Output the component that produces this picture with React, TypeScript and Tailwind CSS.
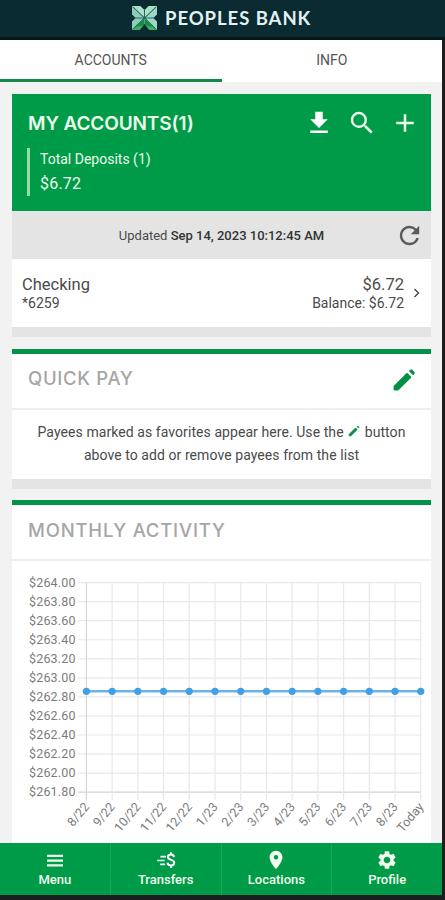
import React from "react";
import { MdAdd, MdFileDownload, MdPlace, MdRefresh, MdSearch, MdSettings } from "react-icons/md";

const months = ["8/22", "9/22", "10/22", "11/22", "12/22", "1/23", "2/23", "3/23", "4/23", "5/23", "6/23", "7/23", "8/23", "Today"];
const amounts = ["$264.00", "$263.80", "$263.60", "$263.40", "$263.20", "$263.00", "$262.80", "$262.60", "$262.40", "$262.20", "$262.00", "$261.80"];

function Logo() {
  return (
    <svg className="mt-[6px] h-[24px] w-[25px] shrink-0" viewBox="0 0 24 24" preserveAspectRatio="none">
      <path d="M0 0H24L12 12Z" fill="#a9e0cb" />
      <path d="M0 0V24L12 12Z" fill="#8bcdb6" />
      <path d="M24 0V24L12 12Z" fill="#9ed8c4" />
      <path d="M0 24H24L12 12Z" fill="#3db05f" />
      <path d="M8 0H16L12 4ZM7.5 24H16.5L12 18ZM0 8.5V15.5L3.5 12ZM24 8.5V15.5L20.5 12Z" fill="#0a2b32" />
      <path d="M1 1L23 23M23 1L1 23M12 3V12M2 12H22" stroke="#2b6660" strokeWidth="1" />
      <path d="M4 21L11.5 13V19ZM20 21L12.5 13V19Z" fill="#168a45" />
    </svg>
  );
}

function Pencil({ className }: { className: string }) {
  return (
    <svg className={className} viewBox="0 0 24 24" fill="currentColor" stroke="currentColor" strokeLinejoin="round">
      <path d="M3.9 17.6L14.6 6.9L17.3 9.6L6.6 20.2H3.9Z" strokeWidth="1.7" />
      <path d="M17.3 4.3L18.3 3.6L20.4 5.7L19.8 6.8Z" strokeWidth="1.6" />
    </svg>
  );
}

function Chart() {
  const x = (i: number) => 74.4 + i * 25.72;
  const y = (i: number) => 21.6 + i * 19.05;
  return (
    <svg className="block h-[282px] w-[419px]" viewBox="0 0 419 282">
      {amounts.map((a, i) => (
        <g key={a}>
          <line x1="66" x2="409" y1={y(i)} y2={y(i)} stroke={i === 11 ? "#d2d2d2" : "#e8e8e8"} strokeWidth="1.2" />
          <text x="63.5" y={y(i) + 4} textAnchor="end" textLength="46.5" className="font-[Roboto] text-[12.5px]" fill="#7c7c7c">{a}</text>
        </g>
      ))}
      {months.map((m, i) => (
        <g key={m}>
          <line x1={x(i)} x2={x(i)} y1={y(0)} y2={y(11) + 8} stroke={i === 0 ? "#d6d6d6" : "#e8e8e8"} strokeWidth="1.2" />
          <text transform={`translate(${x(i) + 3.5} ${y(11) + 15}) rotate(-50)`} textAnchor="end" className="font-[Roboto] text-[12.5px]" fill="#7c7c7c">{m}</text>
        </g>
      ))}
      <line x1={x(0)} x2={x(13)} y1="130.3" y2="130.3" stroke="#6cb3ec" strokeWidth="2.4" />
      {months.map((m, i) => <circle key={m} cx={x(i)} cy="130.3" r="3.6" fill="#419fe6" />)}
    </svg>
  );
}

function MenuIcon() {
  return (
    <svg className="h-[24px] w-[24px]" viewBox="0 0 24 24">
      <path d="M4 7.8h16M4 12.6h16M4 17.4h16" stroke="#f0fcec" strokeWidth="2.3" />
    </svg>
  );
}

function TransferIcon() {
  return (
    <svg className="h-[24px] w-[24px]" viewBox="0 0 24 24" fill="none" stroke="white">
      <path d="M6.5 8.6h5.5M3.2 12.5h7.5M6.2 16.4h5" strokeWidth="1.7" />
      <path d="M20 9.2C19.8 7.4 18.7 6.5 17 6.5c-1.9 0-3.1 1-3.1 2.6 0 3.6 6.3 1.9 6.3 5.6 0 1.7-1.3 2.7-3.2 2.7-2.1 0-3.3-1-3.4-2.8M17 4.2v2.3M17 17.4v2.7" strokeWidth="2" />
    </svg>
  );
}

const nav = [
  { label: "Menu", icon: <MenuIcon /> },
  { label: "Transfers", icon: <TransferIcon /> },
  { label: "Locations", icon: <MdPlace className="h-[22px] w-[22px]" /> },
  { label: "Profile", icon: <MdSettings className="h-[22px] w-[22px]" /> },
];

export default function App() {
  return (
    <div className="flex h-[900px] w-[445px] flex-col overflow-hidden bg-[#1b1d1e] font-[Roboto,sans-serif] text-[#4a4a4a]">
      <header className="flex h-[40px] shrink-0 border-b-[3px] border-[#04171b] bg-[#0a2b32] pl-[132px]">
        <Logo />
        <span className="ml-[8px] mt-[5px] whitespace-nowrap font-[Lato] text-[18.5px] font-bold leading-[27px] tracking-[0.95px] text-[#e3f1f0]">PEOPLES BANK</span>
      </header>

      <div className="flex h-[803px] w-[442px] shrink-0 flex-col overflow-hidden bg-[#f2f2f2]">
        <nav className="flex h-[42px] shrink-0 bg-white text-center text-[14px] leading-[41px] text-[#555]">
          <div className="w-[221.5px] border-b-[3px] border-[#14874a]">ACCOUNTS</div>
          <div className="flex-1">INFO</div>
        </nav>

        <main className="ml-[12px] mt-[12px] w-[419px]">
          <section className="border-b-[10px] border-[#e4e4e4] bg-white">
            <div className="h-[117px] bg-[#009b48] text-[#ecfbea]">
              <div className="flex items-center pl-[16px] pr-[11px] pt-[14px]">
                <h1 className="flex-1 whitespace-nowrap pt-[2px] font-[Inter] text-[19px] font-semibold leading-[28px] tracking-[-0.12px]">MY ACCOUNTS(1)</h1>
                <div className="flex gap-[13px]">
                  <MdFileDownload className="size-[30px] text-white" />
                  <MdSearch className="size-[30px]" />
                  <MdAdd className="size-[30px]" />
                </div>
              </div>
              <div className="ml-[15px] mt-[10px] h-[48px] border-l-[3px] border-[#96dda2] pl-[10px]">
                <div className="text-[14px] leading-[22px]">Total Deposits (1)</div>
                <div className="pt-px text-[16px] leading-[26px] tracking-[0.2px]">$6.72</div>
              </div>
            </div>
            <div className="flex h-[48px] items-center bg-[#e4e4e4] pr-[7px]">
              <div className="flex-1 pl-[36px] pt-px text-center text-[13px] leading-[20px]">Updated <span className="font-medium text-[#333]">Sep 14, 2023 10:12:45 AM</span></div>
              <MdRefresh className="size-[29px] text-[#5a5a5a]" />
            </div>
            <div className="flex h-[68px] items-center pl-[10px] pr-[11px]">
              <div className="flex-1">
                <div className="text-[16.5px] leading-[19px]">Checking</div>
                <div className="text-[14px] leading-[18px]">*6259</div>
              </div>
              <div className="text-right">
                <div className="text-[16.5px] leading-[19px]">$6.72</div>
                <div className="text-[14px] leading-[18px]">Balance: $6.72</div>
              </div>
              <svg className="ml-[9px] h-[10px] w-[7px]" viewBox="0 0 7 10"><path d="M1.5 1L5.5 5L1.5 9" fill="none" stroke="#444" strokeWidth="1.4" /></svg>
            </div>
          </section>

          <section className="mt-[12px] border-b-[10px] border-t-[5px] border-b-[#e4e4e4] border-t-[#04924a] bg-white">
            <div className="flex h-[56px] justify-between border-b-2 border-[#eeeeee] pl-[16px] pr-[13px]">
              <h2 className="pt-[9px] font-[Inter] text-[18.5px] font-medium leading-[30px] tracking-[0.7px] text-[#a6a6a6]">QUICK PAY</h2>
              <Pencil className="mt-[12px] size-[28px] text-[#009045]" />
            </div>
            <p className="h-[69px] pt-[11px] text-center text-[14px] leading-[23px] tracking-[0.07px]">
              Payees marked as favorites appear here. Use the <Pencil className="inline size-[14px] align-[-1px] text-[#009045]" /> button<br />above to add or remove payees from the list
            </p>
          </section>

          <section className="mt-[11px] border-t-[5px] border-t-[#04924a] bg-white">
            <div className="h-[56px] border-b-2 border-[#eeeeee] pl-[16px]">
              <h2 className="pt-[10px] font-[Inter] text-[18.5px] font-medium leading-[30px] tracking-[0.8px] text-[#a6a6a6]">MONTHLY ACTIVITY</h2>
            </div>
            <Chart />
          </section>
        </main>
      </div>

      <footer className="flex h-[52px] w-[442px] shrink-0 bg-[#009b48] text-[#f0fcec]">
        {nav.map((n) => (
          <div key={n.label} className="flex flex-1 flex-col items-center border-r border-[#18a657] pt-[5px] last:border-r-0">
            <div className="flex h-[24px] items-center justify-center">{n.icon}</div>
            <div className="text-[13px] font-medium leading-[15px]">{n.label}</div>
          </div>
        ))}
      </footer>
    </div>
  );
}
